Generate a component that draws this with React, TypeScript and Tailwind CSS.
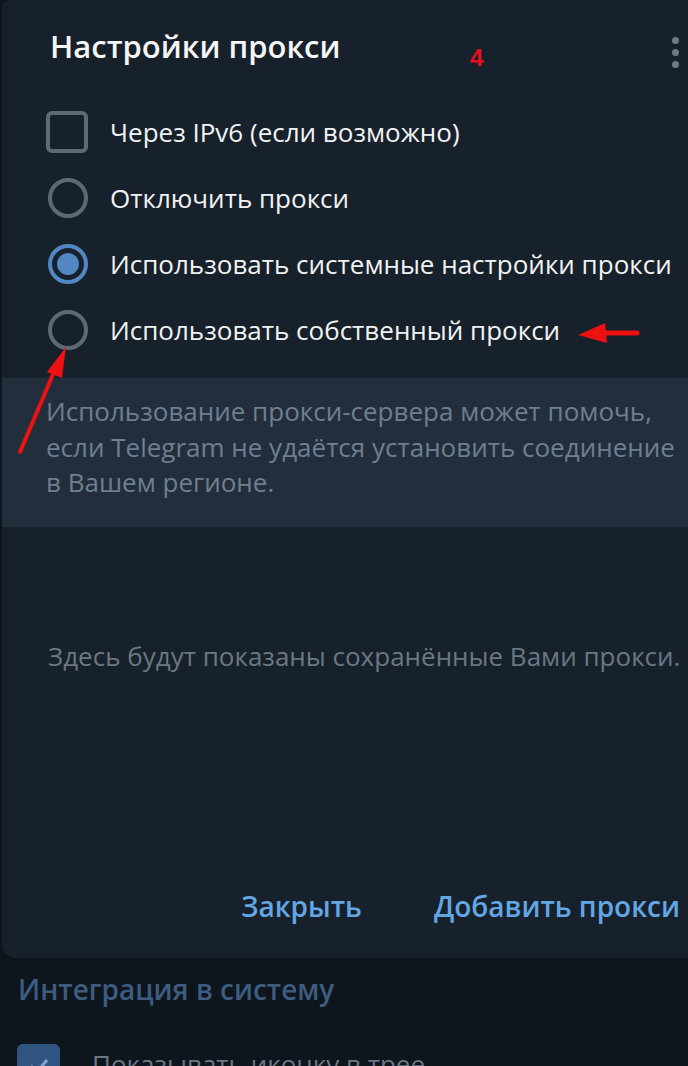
import React from "react";

function Radio({ checked }: { checked?: boolean }) {
  return (
    <div
      className={
        "w-[40px] h-[40px] rounded-full border-[4px] flex items-center justify-center shrink-0 " +
        (checked ? "border-[#5288c1]" : "border-[#5d6974]")
      }
    >
      {checked && <div className="w-[22px] h-[22px] rounded-full bg-[#5288c1]" />}
    </div>
  );
}

export default function App() {
  return (
    <div
      className="w-[688px] h-[1066px] bg-[#0e151d] overflow-hidden relative"
      style={{ fontFamily: '"Open Sans", "Noto Sans", sans-serif' }}
    >
      <div className="ml-[2px] h-[958px] bg-[#17212b] rounded-bl-[14px] rounded-tl-[8px] flex flex-col relative">
        {/* header */}
        <div className="flex items-start pt-[26px] pl-[48px] pr-[8px]">
          <div className="text-[31px] leading-[40px] font-semibold text-[#f5f5f5] whitespace-nowrap">Настройки прокси</div>
          <div className="flex-1" />
          <div className="flex flex-col gap-[5px] pt-[11px] mr-[1px]">
            <div className="w-[7px] h-[7px] rounded-full bg-[#6e7b87]" />
            <div className="w-[7px] h-[7px] rounded-full bg-[#6e7b87]" />
            <div className="w-[7px] h-[7px] rounded-full bg-[#6e7b87]" />
          </div>
        </div>

        {/* options */}
        <div className="mt-[31px] flex flex-col pl-[44px] text-[26px] leading-[36px] text-[#f2f2f2]">
          <div className="h-[66px] flex items-center gap-[22px]">
            <div className="w-[42px] h-[42px] rounded-[6px] border-[4px] border-[#5d6974] shrink-0" />
            <span className="whitespace-nowrap">Через IPv6 (если возможно)</span>
          </div>
          <div className="h-[66px] flex items-center gap-[22px] pl-[2px]">
            <Radio />
            <span className="whitespace-nowrap">Отключить прокси</span>
          </div>
          <div className="h-[66px] flex items-center gap-[22px] pl-[2px]">
            <Radio checked />
            <span className="whitespace-nowrap">Использовать системные настройки прокси</span>
          </div>
          <div className="h-[66px] flex items-center gap-[22px] pl-[2px]">
            <Radio />
            <span className="whitespace-nowrap">Использовать собственный прокси</span>
          </div>
        </div>

        {/* info band */}
        <div className="mt-[15px] bg-[#232e3c] pl-[44px] pr-[10px] pt-[16px] pb-[26px] text-[26px] leading-[35.5px] text-[#6d7f90] whitespace-nowrap">
          Использование прокси-сервера может помочь,
          <br />
          если Telegram не удаётся установить соединение
          <br />
          в Вашем регионе.
        </div>

        {/* empty state */}
        <div className="flex-1 flex items-center pl-[46px] pb-[100px]">
          <div className="text-[26px] leading-[36px] text-[#6b7784] whitespace-nowrap">
            Здесь будут показаны сохранённые Вами прокси.
          </div>
        </div>

        {/* buttons */}
        <div className="flex justify-end items-center gap-[72px] pr-[8px] pb-[32px] text-[28px] leading-[40px] font-semibold text-[#63a6e4]">
          <span>Закрыть</span>
          <span>Добавить прокси</span>
        </div>

        {/* annotation 4 */}
        <div
          className="absolute left-[468px] top-[42px] text-[24px] font-bold text-[#e8101a] leading-[32px]"
          style={{ fontFamily: '"Liberation Sans", sans-serif' }}
        >
          4
        </div>
      </div>

      {/* below dialog */}
      <div className="pl-[18px] pt-[12px] text-[28px] leading-[38px] font-semibold text-[#3c5d80] whitespace-nowrap">
        Интеграция в систему
      </div>
      <div className="mt-[36px] pl-[17px] flex items-start gap-[32px]">
        <div className="w-[43px] h-[43px] rounded-[6px] bg-[#2f5480] flex items-center justify-center shrink-0">
          <svg width="24" height="24" viewBox="0 0 24 24">
            <path d="M4 12l6 6L20 6" stroke="#7ea6d0" strokeWidth="3" fill="none" />
          </svg>
        </div>
        <span className="text-[26px] leading-[36px] pt-[2px] text-[#6b7784] whitespace-nowrap">Показывать иконку в трее</span>
      </div>

      {/* red arrows (annotations) */}
      <svg className="absolute left-0 top-0 pointer-events-none" width="688" height="1066">
        <line x1="637" y1="333" x2="604" y2="333" stroke="#ee1111" strokeWidth="5" strokeLinecap="round" />
        <polygon points="578,335 605,323 607,343" fill="#ee1111" />
        <line x1="20" y1="452" x2="54" y2="372" stroke="#ee1111" strokeWidth="4" strokeLinecap="round" />
        <polygon points="66,347 47,372 62,378" fill="#ee1111" />
      </svg>
    </div>
  );
}
